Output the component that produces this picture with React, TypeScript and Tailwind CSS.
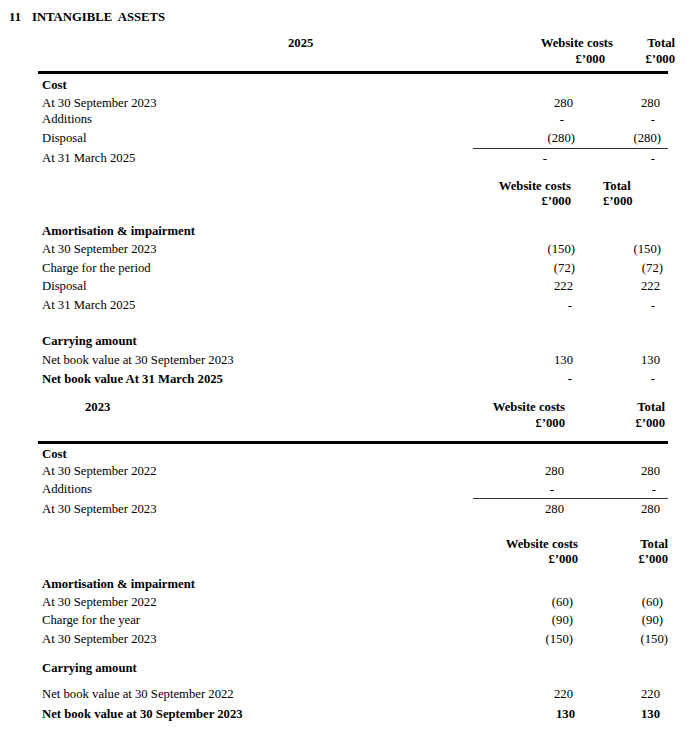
import React from "react";

interface RowProps {
  label: string;
  a?: string;
  b?: string;
  bold?: boolean;
  h: string;
  aCls?: string;
  bCls?: string;
}

// one line of the note: label on the left, two right-aligned amount columns
function Row({ label, a = "", b = "", bold, h, aCls = "", bCls = "" }: RowProps) {
  return (
    <div className={`flex items-center pr-[23px] ${h} ${bold ? "font-bold" : ""}`}>
      <div className="flex-1 pl-[42px] whitespace-nowrap">{label}</div>
      <div className={`w-[110px] text-right ${aCls}`}>{a}</div>
      <div className={`w-[93px] text-right ${bCls}`}>{b}</div>
    </div>
  );
}

function Heading({ text, h }: { text: string; h: string }) {
  return (
    <div className={`flex items-center pl-[42px] font-bold ${h}`}>{text}</div>
  );
}

function ThickRule({ mt }: { mt: string }) {
  return <div className={`ml-[38px] mr-[23px] h-[3px] bg-black ${mt}`} />;
}

function ThinRule() {
  return (
    <div className="flex h-px">
      <div className="flex-1" />
      <div className="w-[195px] mr-[23px] bg-[#333]" />
    </div>
  );
}

export default function App() {
  return (
    <div
      className="w-[691px] h-[737px] bg-white text-black text-[12.7px] leading-[14px]"
      style={{ fontFamily: '"Liberation Serif", "Times New Roman", serif' }}
    >
      {/* title */}
      <div className="flex items-center h-[34px] pl-[9px] font-bold">
        <span>11</span>
        <span className="ml-[11px]">INTANGIBLE&nbsp; ASSETS</span>
      </div>

      {/* 2025 */}
      <div className="flex items-center h-[18px] pr-[16px] font-bold">
        <div className="flex-1 pl-[288px]">2025</div>
        <div className="w-[100px] text-right whitespace-nowrap">Website costs</div>
        <div className="w-[62px] text-right">Total</div>
      </div>
      <div className="flex items-center h-[14px] pr-[16px] font-bold">
        <div className="flex-1" />
        <div className="w-[100px] text-right pr-[8px]">£’000</div>
        <div className="w-[62px] text-right">£’000</div>
      </div>
      <ThickRule mt="mt-[5px]" />

      <Heading text="Cost" h="h-[22px]" />
      <Row label="At 30 September 2023" a="280" b="280" h="h-[14px]" aCls="pr-[2px]" bCls="pr-[8px]" />
      <Row label="Additions" a="-" b="-" h="h-[18px]" aCls="pr-[11px]" bCls="pr-[13px]" />
      <Row label="Disposal" a="(280)" b="(280)" h="h-[20px]" bCls="pr-[7px]" />
      <ThinRule />
      <Row label="At 31 March 2025" a="-" b="-" h="h-[18px]" aCls="pr-[28px]" bCls="pr-[13px]" />

      <div className="flex items-center h-[17px] mt-[10px] pr-[31px] font-bold">
        <div className="flex-1" />
        <div className="w-[100px] text-right whitespace-nowrap">Website costs</div>
        <div className="w-[89px] pl-[32px]">Total</div>
      </div>
      <div className="flex items-center h-[14px] pr-[31px] font-bold">
        <div className="flex-1" />
        <div className="w-[100px] text-right">£’000</div>
        <div className="w-[89px] pl-[32px]">£’000</div>
      </div>

      <Heading text="Amortisation & impairment" h="h-[18px] mt-[14px]" />
      <Row label="At 30 September 2023" a="(150)" b="(150)" h="h-[18px]" bCls="pr-[7px]" />
      <Row label="Charge for the period" a="(72)" b="(72)" h="h-[19px]" bCls="pr-[5px]" />
      <Row label="Disposal" a="222" b="222" h="h-[18px]" aCls="pr-[2px]" bCls="pr-[8px]" />
      <Row label="At 31 March 2025" a="-" b="-" h="h-[19px]" aCls="pr-[3px]" bCls="pr-[13px]" />

      <Heading text="Carrying amount" h="h-[18px] mt-[18px]" />
      <Row label="Net book value at 30 September 2023" a="130" b="130" h="h-[19px]" aCls="pr-[2px]" bCls="pr-[8px]" />
      <Row label="Net book value At 31 March 2025" a="-" b="-" bold h="h-[19px]" aCls="pr-[3px]" bCls="pr-[13px]" />

      {/* 2023 */}
      <div className="flex items-center h-[18px] mt-[10px] pr-[26px] font-bold">
        <div className="flex-1 pl-[85px]">2023</div>
        <div className="w-[100px] text-right whitespace-nowrap">Website costs</div>
        <div className="w-[100px] text-right">Total</div>
      </div>
      <div className="flex items-center h-[14px] pr-[26px] font-bold">
        <div className="flex-1" />
        <div className="w-[100px] text-right">£’000</div>
        <div className="w-[100px] text-right">£’000</div>
      </div>
      <ThickRule mt="mt-[11px]" />

      <Heading text="Cost" h="h-[19px]" />
      <Row label="At 30 September 2022" a="280" b="280" h="h-[16px]" aCls="pr-[11px]" bCls="pr-[8px]" />
      <Row label="Additions" a="-" b="-" h="h-[19px]" aCls="pr-[21px]" bCls="pr-[12px]" />
      <ThinRule />
      <Row label="At 30 September 2023" a="280" b="280" h="h-[20px]" aCls="pr-[11px]" bCls="pr-[8px]" />

      <div className="flex items-center h-[17px] mt-[16px] pr-[23px] font-bold">
        <div className="flex-1" />
        <div className="w-[100px] text-right whitespace-nowrap">Website costs</div>
        <div className="w-[90px] text-right">Total</div>
      </div>
      <div className="flex items-center h-[14px] pr-[23px] font-bold">
        <div className="flex-1" />
        <div className="w-[100px] text-right">£’000</div>
        <div className="w-[90px] text-right">£’000</div>
      </div>

      <Heading text="Amortisation & impairment" h="h-[18px] mt-[9px]" />
      <Row label="At 30 September 2022" a="(60)" b="(60)" h="h-[17px]" aCls="pr-[2px]" bCls="pr-[5px]" />
      <Row label="Charge for the year" a="(90)" b="(90)" h="h-[19px]" aCls="pr-[2px]" bCls="pr-[5px]" />
      <Row label="At 30 September 2023" a="(150)" b="(150)" h="h-[19px]" aCls="pr-[2px]" />

      <Heading text="Carrying amount" h="h-[18px] mt-[11px]" />
      <Row label="Net book value at 30 September 2022" a="220" b="220" h="h-[18px] mt-[8px]" aCls="pr-[2px]" bCls="pr-[8px]" />
      <Row label="Net book value at 30 September 2023" a="130" b="130" bold h="h-[22px]" bCls="pr-[8px]" />
    </div>
  );
}
